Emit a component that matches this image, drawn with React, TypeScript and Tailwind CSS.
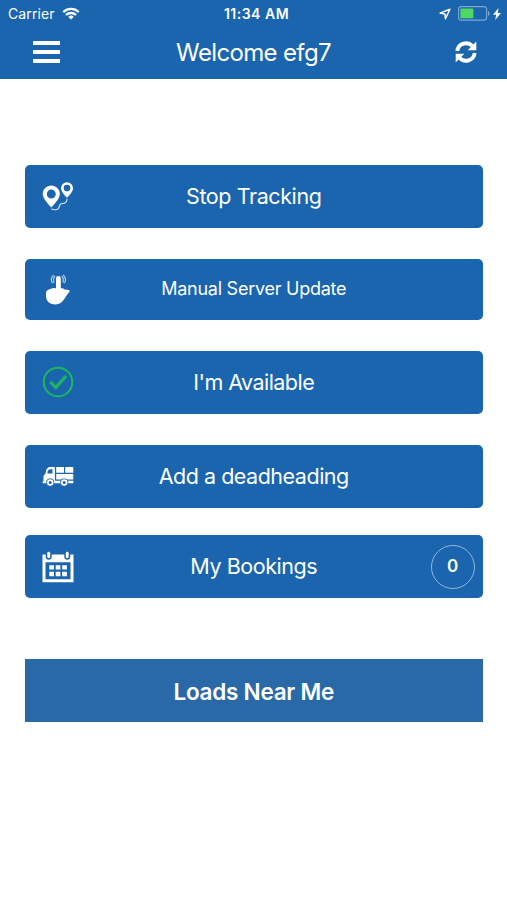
import React from 'react'

function WifiIcon() {
  return (
    <svg className="w-[18px] h-[13px]" viewBox="0 0 18 13" fill="none" stroke="#fff" strokeWidth="2.3">
      <path d="M1.3 5.1A11 11 0 0 1 16.700 5.1" />
      <path d="M4 8A7.200 7.200 0 0 1 14 8" />
      <path d="M9 12.500 6.300 9.900a3.900 3.900 0 0 1 5.400 0z" fill="#fff" stroke="none" />
    </svg>
  )
}

function LocationIcon() {
  return (
    <svg className="w-3 h-3" viewBox="0 0 12 12" fill="none" stroke="#fff" strokeWidth="1.500" strokeLinejoin="round">
      <path d="M10.900 1.300 1 5.100 5.900 6.100 6.500 10.800z" />
    </svg>
  )
}

function BatteryIcon() {
  return (
    <svg className="w-8 h-[15px]" viewBox="0 0 32 15" fill="none">
      <rect x=".6" y=".6" width="28" height="13.500" rx="2.800" stroke="#7ea9d4" strokeWidth="1.100" />
      <rect x="2.400" y="2.500" width="13" height="9.800" rx="1" fill="#4cd964" />
      <path d="M30 5v5q1.700-.8 1.700-2.500T30 5z" fill="#7ea9d4" />
    </svg>
  )
}

function BoltIcon() {
  return (
    <svg className="w-2 h-3" viewBox="0 0 8 12" fill="#fff">
      <path d="M5.500 0 0 6.800h3.200L2.200 12 8 5.100H4.700z" />
    </svg>
  )
}

function RefreshIcon() {
  return (
    <svg className="w-[22px] h-[22px]" viewBox="0 0 22 22">
      <g fill="none" stroke="#fff" strokeWidth="3.800">
        <path d="M2.300 10A8.700 8.700 0 0 1 17.600 5.400" />
        <path d="M19.700 12A8.700 8.700 0 0 1 4.400 16.600" />
      </g>
      <path d="M21.300 .6v8.600h-8.600zM.7 21.400v-8.600h8.600z" fill="#fff" />
    </svg>
  )
}

function RouteIcon() {
  return (
    <svg className="w-8 h-8" viewBox="0 0 32 32" fill="#fff">
      <path fillRule="evenodd" d="M9.300 4.600c-4.700 0-8.500 3.700-8.500 8.300 0 4 3.500 8 8.500 13.500 5-5.500 8.500-9.500 8.500-13.500 0-4.600-3.800-8.300-8.500-8.300zm0 4a4.500 4.500 0 1 1 0 9 4.500 4.500 0 0 1 0-9z" />
      <path fillRule="evenodd" d="M25 1.200a6 6 0 0 0-6 6c0 3 2.500 5.700 6 9.600 3.500-3.900 6-6.600 6-9.600a6 6 0 0 0-6-6zm0 2.600a3.300 3.300 0 1 1 0 6.600 3.300 3.300 0 0 1 0-6.600z" />
      <path d="M9.300 28c3 1.200 7 1.200 7.700-1.500.5-2 .6-4 3.200-4 3 0 4.800-1.200 5-4.700" fill="none" stroke="#d7e7f7" strokeWidth="1.100" />
    </svg>
  )
}

function TapIcon() {
  return (
    <svg className="w-8 h-8" viewBox="0 0 32 32" fill="#fff">
      <path d="M14 14.500V4.300a2.400 2.400 0 0 1 4.800 0v10c1.600-.2 2.900.3 3.600 1.300l4 .3c1.300.2 1.600 1.300.8 2.200-2 2-3.300 4.800-5 7.200-2 3-4.600 5.200-8.600 5.200C7.900 30.500 4 27 4 22v-2.600c0-2.400 1.700-3.500 4-4.300 2-.7 3.800-1.800 6-.6z" />
      <g fill="none" stroke="#a9cdef" strokeWidth="1.200">
        <path d="M12 8.800q-1.500-3.800 1-6.800" />
        <path d="M20.800 8.800q1.500-3.800-1-6.800" />
        <path d="M10.400 9.300q-2.600-5 1.200-8.300" />
        <path d="M22.400 9.300q2.600-5-1.200-8.300" />
      </g>
    </svg>
  )
}

function AvailableIcon() {
  return (
    <svg className="w-8 h-8" viewBox="0 0 32 32" fill="none" stroke="#1cb85f">
      <circle cx="16" cy="16" r="14.300" strokeWidth="2" />
      <path d="m8.300 15.900 5.600 5.600 10.100-11.500" strokeWidth="3.100" />
    </svg>
  )
}

function TruckIcon() {
  return (
    <svg className="w-8 h-8" viewBox="0 0 32 32" fill="#fff">
      <path fillRule="evenodd" d="M12.900 7H8.500C5 7 4.200 9.500 3.700 13L1.500 16v5.200H.7v2h12.200zM10.500 9.200v4.200H5.300c.4-2.800 1.200-4.200 3.200-4.200z" />
      <path d="M14.200 6.900h7.800v5.900h-7.800zM23.200 6.900h8.100v5.900h-8.100zM14.200 14h17.100v5.500H14.200zM12 20.700h19.300v2.500H12z" />
      <g stroke="#1a65ad" strokeWidth=".9">
        <circle cx="8.200" cy="22.500" r="3.800" />
        <circle cx="22.200" cy="22.500" r="3.800" />
      </g>
      <g fill="#1a65ad">
        <circle cx="8.200" cy="22.500" r="1.500" />
        <circle cx="22.200" cy="22.500" r="1.500" />
      </g>
    </svg>
  )
}

function CalendarIcon() {
  return (
    <svg className="w-8 h-8" viewBox="0 0 32 32" fill="#fff">
      <path fillRule="evenodd" d="M.5 3.600h3.200v2.200a3 3 0 0 0 6 0V3.600h12.600v2.200a3 3 0 0 0 6 0V3.600h3.200v27.600H.5zM3.500 11.300v17h25v-17z" />
      <rect x="5.300" y=".8" width="2.900" height="6.400" rx="1.400" />
      <rect x="23.800" y=".8" width="2.900" height="6.400" rx="1.400" />
      <path d="M7.300 14.200h4.700v4.300H7.300zM13.700 14.200h4.700v4.300h-4.700zM20.200 14.200h4.700v4.300h-4.700zM7.300 20.800h4.700v4.500H7.300zM13.700 20.800h4.700v4.500h-4.700zM20.200 20.800h4.700v4.500h-4.700z" />
    </svg>
  )
}

const actions = [
  { label: 'Stop Tracking', icon: RouteIcon, box: 'h-[63px]', text: 'text-[21.5px] tracking-[-0.4px] pt-px' },
  { label: 'Manual Server Update', icon: TapIcon, box: 'mt-[31px] h-[61px]', text: 'text-[18px] tracking-[-0.25px] pb-px' },
  { label: "I'm Available", icon: AvailableIcon, box: 'mt-[30.5px] h-[63px]', text: 'text-[21.5px] tracking-[-0.55px] pt-[2px]' },
  { label: 'Add a deadheading', icon: TruckIcon, box: 'mt-[31px] h-[63px]', text: 'text-[21.5px] tracking-[-0.48px] pt-[2px]' },
  { label: 'My Bookings', icon: CalendarIcon, box: 'mt-[27px] h-[63px] pt-px', text: 'text-[21.5px] tracking-[-0.45px] pt-px', count: 0 },
]

export default function App() {
  return (
    <div className="w-[507px] h-[900px] bg-white text-white font-['Inter',sans-serif]">
      <header className="h-[79px] bg-[#1a65ad]">
        <div className="grid grid-cols-[1fr_auto_1fr] items-center h-[27px] pl-2 pr-[6px]">
          <div className="flex items-center gap-[7px]">
            <span className="text-[14px] leading-none tracking-[0.1px]">Carrier</span>
            <WifiIcon />
          </div>
          <span className="text-[14px] leading-none font-semibold tracking-[0.5px] pl-1">11:34 AM</span>
          <div className="flex items-center justify-end">
            <LocationIcon />
            <div className="ml-[7px] mr-[3px] flex"><BatteryIcon /></div>
            <BoltIcon />
          </div>
        </div>
        <div className="grid grid-cols-[1fr_auto_1fr] items-center h-[50px] pl-[33px] pr-[30px]">
          <button className="flex flex-col gap-[5px] w-[27px]" aria-label="Menu">
            <span className="h-1 w-full bg-white" />
            <span className="h-1 w-full bg-white" />
            <span className="h-1 w-full bg-white" />
          </button>
          <h1 className="text-[24px] leading-none tracking-[-0.65px] pt-[2px] pr-[3px]">Welcome efg7</h1>
          <button className="flex justify-end" aria-label="Refresh">
            <RefreshIcon />
          </button>
        </div>
      </header>

      <main className="flex flex-col pt-[86px] pl-[25px] pr-[24.5px]">
        {actions.map(({ label, icon: Icon, box, text, count }) => (
          <button
            key={label}
            className={`grid grid-cols-[60px_1fr_60px] items-center rounded-[5px] bg-[#1a65ad] ${box}`}
          >
            <span className="pl-[17px]"><Icon /></span>
            <span className={`text-center leading-none whitespace-nowrap ${text}`}>{label}</span>
            {count !== undefined && (
              <span className="flex items-center justify-center justify-self-end mr-2 w-[44px] h-[44px] rounded-full border border-[#8fb7dd] pt-px text-[17px] font-semibold">
                {count}
              </span>
            )}
          </button>
        ))}
        <button className="mt-[61px] h-[63.5px] pt-[3px] bg-[#2969a8] text-[22.5px] font-semibold tracking-[-0.25px]">
          Loads Near Me
        </button>
      </main>
    </div>
  )
}
